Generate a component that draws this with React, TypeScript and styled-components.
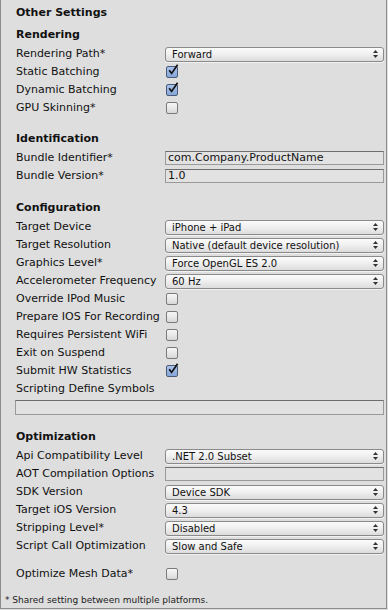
import * as React from 'react';
import styled, { createGlobalStyle } from 'styled-components';

const GlobalStyle = createGlobalStyle`
  html, body {
    margin: 0;
    padding: 0;
    background: #dedede;
  }
  body {
    font-family: "DejaVu Sans", "Liberation Sans", sans-serif;
    color: #111;
  }
`;

type Field =
  | { kind: 'popup'; label: string; value: string }
  | { kind: 'check'; label: string; checked: boolean }
  | { kind: 'text'; label: string; value: string };

interface ISection {
  title: string;
  gap: number;
  rows: Field[];
}

const sections: ISection[] = [
  {
    title: 'Rendering',
    gap: 4,
    rows: [
      { kind: 'popup', label: 'Rendering Path*', value: 'Forward' },
      { kind: 'check', label: 'Static Batching', checked: true },
      { kind: 'check', label: 'Dynamic Batching', checked: true },
      { kind: 'check', label: 'GPU Skinning*', checked: false },
    ],
  },
  {
    title: 'Identification',
    gap: 12,
    rows: [
      { kind: 'text', label: 'Bundle Identifier*', value: 'com.Company.ProductName' },
      { kind: 'text', label: 'Bundle Version*', value: '1.0' },
    ],
  },
  {
    title: 'Configuration',
    gap: 13,
    rows: [
      { kind: 'popup', label: 'Target Device', value: 'iPhone + iPad' },
      { kind: 'popup', label: 'Target Resolution', value: 'Native (default device resolution)' },
      { kind: 'popup', label: 'Graphics Level*', value: 'Force OpenGL ES 2.0' },
      { kind: 'popup', label: 'Accelerometer Frequency', value: '60 Hz' },
      { kind: 'check', label: 'Override IPod Music', checked: false },
      { kind: 'check', label: 'Prepare IOS For Recording', checked: false },
      { kind: 'check', label: 'Requires Persistent WiFi', checked: false },
      { kind: 'check', label: 'Exit on Suspend', checked: false },
      { kind: 'check', label: 'Submit HW Statistics', checked: true },
    ],
  },
  {
    title: 'Optimization',
    gap: 12,
    rows: [
      { kind: 'popup', label: 'Api Compatibility Level', value: '.NET 2.0 Subset' },
      { kind: 'text', label: 'AOT Compilation Options', value: '' },
      { kind: 'popup', label: 'SDK Version', value: 'Device SDK' },
      { kind: 'popup', label: 'Target iOS Version', value: '4.3' },
      { kind: 'popup', label: 'Stripping Level*', value: 'Disabled' },
      { kind: 'popup', label: 'Script Call Optimization', value: 'Slow and Safe' },
    ],
  },
];

const Arrows = () => (
  <svg width="5" height="8" viewBox="0 0 5 8">
    <path d="M2.5 0 L5 3 L0 3 Z" fill="#333" />
    <path d="M0 5 L5 5 L2.5 8 Z" fill="#333" />
  </svg>
);

const Check = () => (
  <svg width="12" height="12" viewBox="0 0 12 12">
    <path d="M2.2 6.2 L4.6 9.4 L10.6 0.8" fill="none" stroke="#111" strokeWidth="1.7" />
  </svg>
);

const Control = ({ field }: { field: Field }) => {
  if (field.kind === 'popup') {
    return (
      <Popup>
        <PopupText>{field.value}</PopupText>
        <Arrows />
      </Popup>
    );
  }
  if (field.kind === 'check') {
    return (
      <CheckBox checked={field.checked}>
        {field.checked && <Check />}
      </CheckBox>
    );
  }
  return <TextField>{field.value}</TextField>;
};

export default function App() {
  return (
    <>
      <GlobalStyle />
      <Panel>
        <PanelTitle>Other Settings</PanelTitle>
        {sections.map((section) => (
          <Section key={section.title} gap={section.gap}>
            <Heading>{section.title}</Heading>
            {section.rows.map((row) => (
              <Row key={row.label}>
                <Label>{row.label}</Label>
                <Control field={row} />
              </Row>
            ))}
            {section.title === 'Configuration' && (
              <>
                <Row>
                  <Label>Scripting Define Symbols</Label>
                </Row>
                <WideField />
              </>
            )}
          </Section>
        ))}
        <MeshRow>
          <Label>Optimize Mesh Data*</Label>
          <CheckBox checked={false} />
        </MeshRow>
        <Footnote>* Shared setting between multiple platforms.</Footnote>
      </Panel>
    </>
  );
}

const Panel = styled.div`
  box-sizing: border-box;
  width: 387px;
  height: 609px;
  padding: 4px 2px 0 15px;
  border: 1px solid #8c8c8c;
  border-top: none;
  background: #dedede;
  display: flex;
  flex-direction: column;
`;

const PanelTitle = styled.div`
  height: 17px;
  line-height: 17px;
  font-size: 11px;
  font-weight: bold;
  color: #111;
`;

const Section = styled.div<{ gap: number }>`
  display: flex;
  flex-direction: column;
  margin-top: ${(p) => p.gap}px;
`;

const Heading = styled.div`
  height: 20px;
  line-height: 20px;
  font-size: 11px;
  font-weight: bold;
  color: #111;
`;

const Row = styled.div`
  display: grid;
  grid-template-columns: 149px 1fr;
  align-items: center;
  height: 18px;
`;

const MeshRow = styled(Row)`
  margin-top: 10px;
`;

const Label = styled.div`
  font-size: 11px;
  line-height: 18px;
  color: #111;
  white-space: nowrap;
`;

const Popup = styled.div`
  box-sizing: border-box;
  display: flex;
  align-items: center;
  justify-content: space-between;
  height: 15px;
  padding: 0 5px 0 6px;
  border: 1px solid #8a8a8a;
  border-radius: 3px;
  background: linear-gradient(to bottom, #fbfbfb 0%, #f0f0f0 45%, #dcdcdc 100%);
  box-shadow: 0 1px 0 rgba(255, 255, 255, 0.6);
`;

const PopupText = styled.span`
  font-size: 10px;
  line-height: 13px;
  color: #111;
  white-space: nowrap;
`;

const CheckBox = styled.div<{ checked: boolean }>`
  box-sizing: border-box;
  width: 12px;
  height: 12px;
  margin-left: 1px;
  border: 1px solid ${(p) => (p.checked ? '#4a5a78' : '#7a7a7a')};
  border-radius: 2px;
  background: ${(p) =>
    p.checked
      ? 'linear-gradient(to bottom, #a9c2ea 0%, #86a6d8 100%)'
      : 'linear-gradient(to bottom, #f6f6f6 0%, #e6e6e6 60%, #d6d6d6 100%)'};
  position: relative;

  > svg {
    position: absolute;
    left: 0;
    top: -3px;
  }
`;

const TextField = styled.div`
  box-sizing: border-box;
  height: 14px;
  padding: 0 2px;
  border: 1px solid #9a9a9a;
  border-top-color: #6e6e6e;
  background: #e2e2e2;
  font-size: 11px;
  line-height: 12px;
  color: #111;
  white-space: nowrap;
`;

const WideField = styled(TextField)`
  height: 15px;
  margin-top: 2px;
  margin-left: -1px;
`;

const Footnote = styled.div`
  margin-top: 11px;
  font-size: 9px;
  line-height: 12px;
  color: #222;
  margin-left: -11px;
`;
